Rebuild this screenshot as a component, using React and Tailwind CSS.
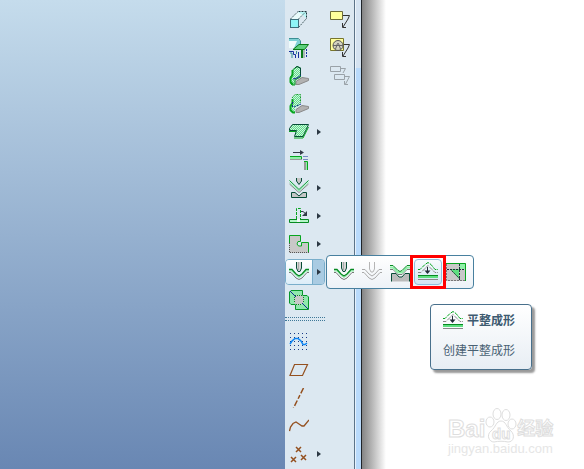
import React from 'react';

const paths = {
  box: (
    <>
      <path d="M2 9L9 2H17L10 9Z" fill="#e9fbfb" />
      <path d="M9 2H17V8L14 5Z" fill="#b9f7f7" />
      <path d="M1.5 9L9 1.5M9.5 9L17 1.5M9.5 17.5L17.5 8.5" stroke="#4d6468" strokeDasharray="2 1" />
      <path d="M9.5 1.5H17.5V9" stroke="#1d3b40" strokeDasharray="2 1" />
      <rect x="1.5" y="9.5" width="8" height="8" fill="#8ff5f7" stroke="#3d6f7c" />
    </>
  ),
  flatWall: (
    <>
      <path d="M0 1H9L11 3V10H0Z" fill="#7fd0d4" />
      <path d="M0 3H8L5 10H0Z" fill="#f0fbfb" />
      <path d="M0 .5H9.5L11.5 3V6" stroke="#3b8f94" />
      <path d="M4 11.5L10 6.500H19.500L15.500 11.500Z" fill="#5ccf7b" stroke="#087a16" />
      <path d="M13 12V20" stroke="#087a16" strokeWidth="2" />
      <path d="M15 12V20" stroke="#aab7b7" strokeWidth="2" />
      <path d="M17.5 11V20" stroke="#17329c" strokeDasharray="2 1" />
      <path d="M0 13.5H4.500V16.5H6.500V20M9.5 14V20" stroke="#17329c" />
      <path d="M1 15H3V20M7.500 13V16" stroke="#3b8f94" />
    </>
  ),
  bracket: (
    <>
      <path d="M7 15.5L13 11.500L19.500 12.500V14.500L10 18.500H7Z" fill="#b2b2b2" stroke="#8a8a8a" />
      <path d="M1.5 17V11L3.500 8V4L6 2L8 .5L11.500 2V11L6 14V19H3Z" fill="url(#dither)" stroke="#0a9022" />
      <path d="M3.5 4V9L1.5 12V16L4 18.5" stroke="#07a51f" strokeWidth="2" />
      <path d="M4 13L8 12L12 9" stroke="#122b93" />
      <path d="M6 2L8 .5L11.5 2V9" stroke="#064c36" />
    </>
  ),
  bracketOpen: (
    <>
      <path d="M7 15.5L13 11.500L19.500 12.500V14.500L10 18.500H7Z" fill="#b2b2b2" stroke="#8a8a8a" />
      <path d="M3 4L6 1H11V11L6 14V19H3L1 17V11L3 8Z" fill="url(#dither)" />
      <path d="M3 4L6 .5H11.500V9" stroke="#15a02b" strokeDasharray="2 1" />
      <path d="M3.5 5V9L1.5 12V16L4 18.5H6" stroke="#07a51f" strokeWidth="2" />
      <path d="M3.5 8V14M5 13L12 10" stroke="#122b93" strokeDasharray="2 1" />
    </>
  ),
  sheet: (
    <>
      <path d="M3.5 2.5H19.500L14 14.5H5.5L7.5 8.5H.5V6.5Z" fill="url(#dither)" stroke="#064c36" />
      <path d="M5 16H14L19.5 5" stroke="#07a51f" />
      <path d="M0 9.500H7" stroke="#07a51f" />
    </>
  ),
  unbend: (
    <>
      <path d="M4 2.5H13" stroke="#333b48" />
      <path d="M11 0L15 2.5L11 5Z" fill="#333b48" />
      <path d="M1 9.500H13" stroke="#999" />
      <path d="M1 6.5H12.500V9" stroke="#07a51f" />
      <path d="M1 8H12" stroke="#8ff0a8" strokeWidth="2" />
      <path d="M14.5 6.5H19M14.5 9.5H19" stroke="#122b93" strokeDasharray="1 1" />
      <path d="M16 11V20" stroke="#999" strokeWidth="2" />
      <path d="M17.5 11V20" stroke="#8ff0a8" />
      <path d="M15 11.5H18.5V20" stroke="#07a51f" />
    </>
  ),
  bendBack: (
    <>
      <path d="M7.5 0V3L10 6.5L12.5 3V0" fill="#c6c6c6" stroke="#064c36" />
      <path d="M.5 6L10 14.5L19.5 6" stroke="#888" />
      <path d="M.5 4.500L10 13L19.5 4.500" stroke="#8ff0a8" />
      <path d="M.5 2.5L10 11.500L19.5 2.5" stroke="#079c2f" />
      <path d="M2.5 19.500V14.5H6L10 18L14 14.5H17.5V19.5Z" fill="#c6c6c6" stroke="#064c36" />
    </>
  ),
  flange: (
    <>
      <path d="M7.5 13V2.5H11.500V13" stroke="#07a51f" strokeDasharray="3 1" />
      <path d="M.5 13.5H19.500V16.5H.5Z" fill="#b4f5c8" stroke="#078a22" />
      <path d="M8 13V16H11V13Z" fill="#f1f7fa" />
      <path d="M12 5.5H14L17 8" stroke="#333b48" />
      <path d="M18 5V10H13Z" fill="#333b48" />
    </>
  ),
  notch: (
    <>
      <path d="M0 1H11V7L8 8V11L11 12L13 9H20V19H0Z" fill="#c8c8c8" />
      <path d="M.5 9V1.500H11.500V7.5H9L8 10L9.5 12H12.500V8.500H19.500V18" stroke="#07a51f" />
      <path d="M.5 9V18.5H20" stroke="#555" strokeDasharray="1 1" />
    </>
  ),
  punch: (
    <>
      <path d="M7.5 0V6L9 9.5H11L12.5 6V0" fill="#d5d5d5" stroke="#064c36" />
      <path d="M9.500 0V8" stroke="#aaa" />
      <path d="M0 10.5H2L7 16L10 17.5L13 16L18 10.5H20" stroke="#777" />
      <path d="M0 9H3L7 13.5L10 15.5L13 13.5L17 9H20" stroke="#8ff0a8" />
      <path d="M0 7.5H3L7 12L10 14L13 12L17 7.5H20" stroke="#078a22" strokeWidth="1.3" />
    </>
  ),
  punchOff: (
    <>
      <path d="M7.5 0V7L9 10H11L12.5 7V0" stroke="#b5b5b5" />
      <path
        d="M0 7.5H3L7 12L10 14L13 12L17 7.5H20M0 10.5H2L7 16L10 17.5L13 16L18 10.5H20"
        stroke="#aaa"
      />
    </>
  ),
  die: (
    <>
      <path d="M1.5 19.500V11.5H6L9 15H12L15 11.5H19.5V19.500" fill="#bbb" stroke="#064c36" />
      <path d="M0 7.5H3L8 12.5H12L17 7.5H20" stroke="#777" />
      <path d="M0 5.5H3L8 10.5H12L17 5.5H20" stroke="#8ff0a8" strokeWidth="2" />
      <path d="M0 3.5H3L8 8.5L10 9.5L12 8.5L17 3.5H20" stroke="#078a22" />
    </>
  ),
  flatten: (
    <>
      <path d="M0 7.5H2L7 2.5L10 .5L13 2.5L17 7.5H20" stroke="#07a51f" strokeDasharray="4 1" />
      <path d="M0 10.5H3L8 5.5L10 3.5L12 5.5L17 10.5H20" stroke="#888" strokeDasharray="4 1" />
      <path d="M9.5 5V11" stroke="#222b38" />
      <path d="M6.500 8.5H12.5L9.5 12Z" fill="#222b38" />
      <path d="M0 13.5H20" stroke="#078a22" />
      <path d="M0 15H20" stroke="#5edf80" strokeWidth="2" />
      <path d="M0 17.5H20" stroke="#888" />
    </>
  ),
  relief: (
    <>
      <path d="M0 1H20V19H0Z" fill="#c8c8c8" />
      <path d="M14 1V7H4L13 17V7" fill="#5edf80" />
      <path d="M14 2H19V7H14Z" fill="#8ff0a8" />
      <path d="M0 1.5H19.5V19" stroke="#07a51f" />
      <path d="M1 7.5H19M13.5 2V18M4 7L14 17" stroke="#222b38" strokeDasharray="2 1" />
      <path d="M.5 2V18.5H20" stroke="#777" strokeDasharray="2 1" />
    </>
  ),
  corner: (
    <>
      <path d="M2 .5H13.5V5.5H18L19.5 7V19.5H6.5V14.5H2L.5 13V2Z" fill="#8fe9ad" stroke="#07952a" />
      <path d="M7 5H13L15 8V12L12 15H7L5 12V8Z" fill="#c8c8c8" />
      <path d="M6 5.500H13M14.5 7V13M5.5 7V13M7 14.5H13" stroke="#078a22" strokeDasharray="1 1" />
      <path d="M1 1L7 7M13 13L19 19" stroke="#122b93" />
    </>
  ),
  sketch: (
    <>
      {[1, 5, 9, 13, 17].map((y) => (
        <path key={y} d={`M1 ${y + 0.5}H18`} stroke="#173a86" strokeDasharray="1 3" />
      ))}
      <path d="M1 12L3 9L6 6.5H9L12 9L14 12.5H16L18 11" stroke="#0a84f5" strokeWidth="1.5" />
    </>
  ),
  plane: <path d="M5.5 4.5H18.5L13.5 15.5H1Z" stroke="#94501f" strokeWidth="1.200" />,
  axis: <path d="M14.5 0L4.5 20" stroke="#94501f" strokeWidth="1.5" strokeDasharray="6 2 4 2" />,
  curve: (
    <path d="M.5 15L1.5 11L4 7.5L7 6L10 8L13 10H15L20 4" stroke="#94501f" strokeWidth="1.300" />
  ),
  points: (
    <path
      d="M7 3L12 8M12 3L7 8M2 13L7 18M7 13L2 18M12 11L17 16M17 11L12 16"
      stroke="#94501f"
      strokeWidth="1.5"
    />
  ),
  note: (
    <>
      <path d="M.5 1.500H12.500V9.500H.5Z" fill="#ffff9c" stroke="#6d6b38" />
      <path d="M13 5.500H19.5L18 9L13 17" stroke="#333" />
      <path d="M12.500 13V17.500H16" stroke="#333" />
    </>
  ),
  symbol: (
    <>
      <path d="M.5 .5H13.500V12.500H.5Z" fill="#ffff9c" stroke="#77752e" />
      <circle cx="8" cy="7.500" r="5" fill="#d4d4c0" stroke="#555" />
      <path d="M3 7.500H13M5.500 11L7.500 5.500H8.500L10.500 11" stroke="#666" />
      <path d="M14 6.500H19.5L18 10L13 18" stroke="#333" />
      <path d="M12.500 14V18.500H16" stroke="#333" />
    </>
  ),
  links: (
    <>
      <path d="M.5 .5H10.500V5.500H.5ZM4.500 8.500H14.500V13.500H4.500Z" stroke="#9aa2a8" />
      <path d="M11 2.500H15.5L13 7M15 10.500H19.5L15 19M14.500 15V18.500H18" stroke="#9aa2a8" />
    </>
  ),
};

function Icon({ name }) {
  return (
    <svg viewBox="0 0 20 20" fill="none" aria-hidden="true" className="size-5 shrink-0">
      {paths[name]}
    </svg>
  );
}

function Arrow() {
  return (
    <svg viewBox="0 0 4 6" aria-hidden="true" className="h-1.5 w-1">
      <path d="M0 0L4 3L0 6Z" fill="#2c3843" />
    </svg>
  );
}

const tools = [
  { icon: 'box', label: '拉伸' },
  { icon: 'flatWall', label: '平整' },
  { icon: 'bracket', label: '法兰' },
  { icon: 'bracketOpen', label: '扭转' },
  { icon: 'sheet', label: '平面', more: true },
  { icon: 'unbend', label: '延伸' },
  { icon: 'bendBack', label: '折弯', more: true },
  { icon: 'flange', label: '展平', more: true },
  { icon: 'notch', label: '凹槽', more: true },
  { icon: 'punch', label: '凸模', more: true, open: true },
  { icon: 'corner', label: '拐角止裂槽' },
];

const datums = [
  { icon: 'sketch', label: '草绘' },
  { icon: 'plane', label: '基准平面' },
  { icon: 'axis', label: '基准轴' },
  { icon: 'curve', label: '基准曲线' },
  { icon: 'points', label: '基准点', more: true },
];

const notes = [
  { icon: 'note', label: '注释' },
  { icon: 'symbol', label: '符号' },
  { icon: 'links', label: '链接' },
];

function Tooltip() {
  return (
    <div
      role="tooltip"
      className="absolute top-[49px] left-[104px] w-[102px] rounded border border-[#48708c] bg-linear-to-b from-white to-[#e8eef4] px-3 pt-1.5 pb-2 text-xs whitespace-nowrap text-[#496173] shadow-[3px_3px_2px_#999]"
    >
      <div className="flex h-5 items-center gap-1">
        <Icon name="flatten" />
        <strong className="text-[#3d5a70]">平整成形</strong>
      </div>
      <p className="mt-2.5 leading-5">创建平整成形</p>
    </div>
  );
}

function Flyout() {
  return (
    <div className="absolute top-[-3px] left-[41px] z-10">
      <div className="flex h-[34px] items-center rounded border border-[#48809f] bg-linear-to-b from-white to-[#edf2f7] px-[3px]">
        {['punch', 'punchOff', 'die'].map((name) => (
          <button key={name} type="button" aria-label={name} className="flex size-7 items-center justify-center">
            <Icon name={name} />
          </button>
        ))}
        <button
          type="button"
          aria-label="平整成形"
          className="relative flex h-[26px] w-7 items-center justify-center rounded-sm border border-[#8fbfdd] bg-linear-to-b from-[#f8fbfe] to-[#d3e6f3]"
        >
          <Icon name="flatten" />
          <span className="absolute -inset-[5px] border-3 border-[#ff0000]" />
        </button>
        <button type="button" aria-label="relief" className="flex size-7 items-center justify-center">
          <Icon name="relief" />
        </button>
      </div>
      <Tooltip />
    </div>
  );
}

function ToolRow({ icon, label, more, open }) {
  return (
    <div className="relative flex h-7 items-center">
      <div
        className={
          open
            ? 'flex h-[26px] w-10 overflow-hidden rounded-sm border border-[#79aecb]'
            : 'flex h-[26px] w-10 border border-transparent'
        }
      >
        <button
          type="button"
          aria-label={label}
          className={
            open
              ? 'flex w-[27px] items-center justify-start border-r border-[#79aecb] bg-linear-to-b from-white to-[#dcedf8] pl-[3px]'
              : 'flex w-[27px] items-center justify-start pl-[3px]'
          }
        >
          <Icon name={icon} />
        </button>
        {more && (
          <button
            type="button"
            aria-label={`${label} ▸`}
            className={
              open
                ? 'flex flex-1 items-center justify-center bg-[#a9cbe2]'
                : 'flex flex-1 items-center justify-center'
            }
          >
            <Arrow />
          </button>
        )}
      </div>
      {open && <Flyout />}
    </div>
  );
}

function Toolbar() {
  return (
    <aside className="relative z-10 flex w-[77px] bg-[#dce8f1]">
      <div className="w-[41px] pt-1.5">
        {tools.map((tool) => (
          <ToolRow key={tool.icon} {...tool} />
        ))}
        <hr className="mt-[3px] mb-[7px] h-1 w-10 border-t border-b border-dotted border-[#3f7898]" />
        {datums.map((tool) => (
          <ToolRow key={tool.icon} {...tool} />
        ))}
      </div>
      <div className="w-7 pt-1.5 pl-1">
        {notes.map(({ icon, label }) => (
          <button key={icon} type="button" aria-label={label} className="flex h-7 items-center">
            <Icon name={icon} />
          </button>
        ))}
      </div>
      <div className="flex flex-1 flex-col border-r border-l border-r-[#1f2429] border-l-[#5c7388]">
        <div className="h-[68px] border-l border-[#eef5fb] bg-[#d5e3f1]" />
        <div className="flex-1 border-l border-[#e6f1fc] bg-[#b9dafb]" />
      </div>
    </aside>
  );
}

function Watermark() {
  return (
    <div className="absolute right-8 bottom-3.5 w-[104px] font-['Liberation_Sans','Noto_Sans_CJK_SC',sans-serif] font-bold whitespace-nowrap text-white">
      <div className="flex h-[38px] items-end [-webkit-text-stroke:1px_#dedede]">
        <span className="text-2xl leading-7">Bai</span>
        <svg viewBox="0 0 32 36" fill="#fff" stroke="#dedede" className="h-9 w-8 shrink-0">
          <ellipse cx="5" cy="15" rx="4" ry="5" />
          <ellipse cx="12" cy="7" rx="4" ry="5.5" />
          <ellipse cx="21" cy="8" rx="4" ry="5.5" />
          <ellipse cx="27" cy="17" rx="4" ry="5" />
          <path d="M16 14C11 14 11 20 6 24C1 28 4 35 9 35C13 34 19 34 23 35C29 35 30 28 26 24C21 20 21 14 16 14Z" />
          <text x="7" y="32" fontSize="15">du</text>
        </svg>
        <span className="text-lg leading-7">经验</span>
      </div>
      <p className="text-[13px] leading-3 font-normal text-[#e6e6e6]">jingyan.baidu.com</p>
    </div>
  );
}

export default function App() {
  return (
    <div className="grid min-h-screen grid-cols-[minmax(0,285fr)_auto_minmax(0,222fr)] overflow-hidden bg-white font-['Liberation_Sans','Noto_Sans_CJK_SC',sans-serif]">
      <svg aria-hidden="true" className="absolute size-0">
        <defs>
          <pattern id="dither" width="2" height="2" patternUnits="userSpaceOnUse">
            <path d="M0 0H2V2H0Z" fill="#c8f8da" />
            <path d="M0 0H1V1H0ZM1 1H2V2H1Z" fill="#64d98c" />
          </pattern>
        </defs>
      </svg>
      <main className="bg-linear-to-b from-[#c5dcec] to-[#6987b3]" />
      <Toolbar />
      <section className="relative bg-linear-to-r from-[#858585] to-white to-[24px]">
        <Watermark />
      </section>
    </div>
  );
}
